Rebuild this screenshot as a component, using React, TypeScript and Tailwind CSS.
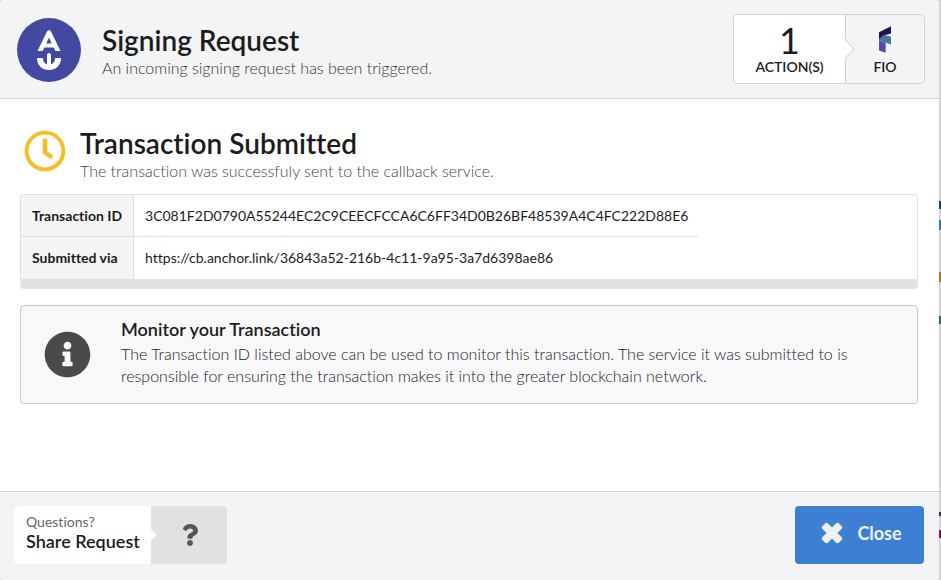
import { FaInfoCircle, FaQuestion, FaRegClock } from "react-icons/fa";

function AnchorLogo() {
  return (
    <svg viewBox="0 0 64 64" className="size-16 shrink-0" aria-hidden="true">
      <circle cx="32" cy="32" r="32" fill="#4149a0" />
      <path
        fill="#fff"
        fillRule="evenodd"
        d="M30 13.500 Q32 10.500 34 13.500 L43.500 33 H38.500 L36.500 29.500 H27.500 L25.500 33 H20.500 Z M32 19.500 L29.300 25.500 H34.700 Z"
      />
      <path d="M30 37 Q30 35 32 35 Q34 35 34 37 V48 H30 Z" fill="#fff" />
      <path d="M20 40 H26 C26 44 28 46.500 32 46.500 C36 46.500 38 44 38 40 H44 C44 47.500 39 52 32 52 C25 52 20 47.500 20 40 Z" fill="#fff" />
    </svg>
  );
}

function FioLogo() {
  return (
    <svg viewBox="0 0 36 80" className="h-[27px] w-3" aria-hidden="true">
      <path d="M0 18 L36 0 V22 L14 28 L0 40 Z" fill="#22104f" />
      <path d="M0 40 L14 26 L36 32 V55 L0 42 Z" fill="#4677a0" />
      <path d="M0 42 L20 50 V80 L0 73 Z" fill="#5a4aa8" />
    </svg>
  );
}

function CloseIcon() {
  return (
    <svg viewBox="0 0 22 22" className="size-[22px]" aria-hidden="true">
      <path
        d="M6.500 1 L11 5.500 L15.500 1 Q16.500 0.300 17.500 1 L21 4.500 Q21.700 5.500 21 6.500 L16.500 11 L21 15.500 Q21.700 16.500 21 17.500 L17.500 21 Q16.500 21.700 15.500 21 L11 16.500 L6.500 21 Q5.500 21.700 4.500 21 L1 17.500 Q0.300 16.500 1 15.500 L5.500 11 L1 6.500 Q0.300 5.500 1 4.500 L4.500 1 Q5.500 0.300 6.500 1 Z"
        fill="currentColor"
      />
    </svg>
  );
}

const rows = [
  { label: "Transaction ID", value: "3C081F2D0790A55244EC2C9CEECFCCA6C6FF34D0B26BF48539A4C4FC222D88E6" },
  { label: "Submitted via", value: "https://cb.anchor.link/36843a52-216b-4c11-9a95-3a7d6398ae86" },
];

/* Slivers of the page that shows behind the dialog's right edge. */
function PageBehind() {
  return (
    <div className="absolute inset-y-0 right-0 w-0.5" aria-hidden="true">
      <span className="absolute right-0 top-[201px] h-2 w-0.5 bg-[#1f3f4d]" />
      <span className="absolute right-0 top-[220px] h-2.5 w-0.5 bg-[#4a7488]" />
      <span className="absolute right-0 top-[272px] h-2.5 w-0.5 bg-[#a07a20]" />
      <span className="absolute right-0 top-[316px] h-2 w-0.5 bg-[#3f5f66]" />
      <span className="absolute right-0 top-[512px] h-1 w-0.5 bg-[#30304a]" />
      <span className="absolute right-0 top-[530px] h-2 w-0.5 bg-[#8a1050]" />
    </div>
  );
}

export default function App() {
  return (
    <div className="relative min-h-screen bg-[#d4d4d5] pr-0.5 font-['Lato',sans-serif] text-[#1b1c1d] [font-variant-ligatures:none]">
      <PageBehind />
      <main className="flex min-h-screen flex-col rounded bg-white">
        <header className="flex items-center justify-between rounded-t border-b border-[#d4d4d5] bg-[#f3f4f6] py-3.5 pl-[17px] pr-3.5">
          <div className="flex items-center gap-[21px] pt-0.5">
            <AnchorLogo />
            <div className="pt-1">
              <h1 className="text-[28px] font-semibold leading-8">Signing Request</h1>
              <p className="text-base font-light leading-6 text-[#333]">An incoming signing request has been triggered.</p>
            </div>
          </div>
          <div className="flex h-[70px] rounded border border-[#d4d4d5]">
            <div className="relative flex w-28 flex-col items-center justify-end rounded-l border-r border-[#d4d4d5] bg-white pb-[7px]">
              <span className="text-4xl leading-9">1</span>
              <span className="text-sm font-semibold leading-[18px]">ACTION(S)</span>
              <span className="absolute -right-[7px] top-1/2 size-3.5 -translate-y-1/2 rotate-45 border-r border-t border-[#d4d4d5] bg-white" />
            </div>
            <div className="flex w-[78px] flex-col items-center justify-end pb-[7px]">
              <FioLogo />
              <span className="mt-[5px] text-sm font-semibold leading-[18px]">FIO</span>
            </div>
          </div>
        </header>

        <section className="flex-1 pl-5 pr-[21px] pt-7">
          <div className="flex items-start gap-3.5 pl-1">
            <FaRegClock className="mt-[3px] size-[42px] text-[#f2c024]" aria-hidden="true" />
            <div>
              <h2 className="text-[28px] font-semibold leading-8">Transaction Submitted</h2>
              <p className="text-base font-light leading-6 text-[#444]">The transaction was successfuly sent to the callback service.</p>
            </div>
          </div>
          <div className="mt-[11px] overflow-hidden rounded border border-b-[10px] border-[#dfe0e1] border-b-[#e2e2e2]">
            <table className="border-separate border-spacing-0 text-sm">
              <tbody>
                {rows.map((row, index) => {
                  const line = index < rows.length - 1 ? "border-b" : "";
                  return (
                    <tr key={row.label} className="h-[42px]">
                      <th scope="row" className={`${line} border-r border-[#dfe0e1] bg-[#f5f5f5] px-[11px] text-left font-bold`}>{row.label}</th>
                      <td className={`${line} border-[#dfe0e1] px-[11px]`}>{row.value}</td>
                    </tr>
                  );
                })}
              </tbody>
            </table>
          </div>
          <div className="mt-4 flex items-center gap-[30px] rounded border border-[#c8c9ca] bg-[#f8f8fa] pb-4 pl-[23px] pr-6 pt-[11px]">
            <FaInfoCircle className="mt-1 size-[47px] shrink-0 text-[#4a4a4b]" aria-hidden="true" />
            <div>
              <h3 className="text-lg font-semibold leading-6">Monitor your Transaction</h3>
              <p className="mt-0.5 text-base font-light leading-[22px] text-[#222]">
                The Transaction ID listed above can be used to monitor this transaction. The service it was submitted to is responsible for ensuring the transaction makes it into the greater blockchain network.
              </p>
            </div>
          </div>
        </section>

        <footer className="flex items-center justify-between rounded-b border-t border-[#d4d4d5] bg-[#f3f4f6] pb-4 pl-3.5 pr-[15px] pt-3.5">
          <button type="button" className="flex h-[58px] overflow-hidden rounded bg-[#e0e1e2] text-left">
            <span className="relative flex h-full w-[137px] flex-col justify-center bg-white pb-1.5 pl-3">
              <span className="text-sm leading-[18px] text-[#666]">Questions?</span>
              <span className="text-lg font-semibold leading-5">Share Request</span>
              <span className="absolute -right-1 top-1/2 size-2 -translate-y-1/2 rotate-45 bg-white" />
            </span>
            <span className="flex h-full w-[76px] items-center justify-center pl-0.5 text-[#555]">
              <FaQuestion className="size-[22px]" aria-hidden="true" />
            </span>
          </button>
          <button type="button" className="flex h-[58px] w-[129px] items-center justify-center gap-3.5 rounded bg-[#3d7fd2] pb-1 pl-1 text-lg font-bold text-[#f1f1f1]">
            <CloseIcon />
            Close
          </button>
        </footer>
      </main>
    </div>
  );
}
